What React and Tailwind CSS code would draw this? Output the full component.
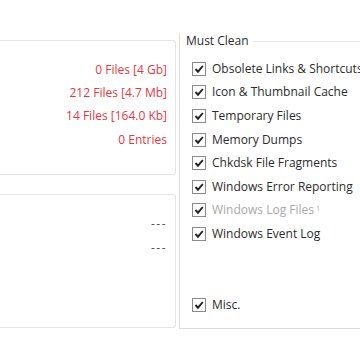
import React from "react";

const font = { fontFamily: '"Open Sans", "Noto Sans", sans-serif' };

function Check() {
  return (
    <span className="w-[14px] h-[14px] border border-[#8a8a8a] bg-white flex items-center justify-center shrink-0">
      <svg width="12" height="12" viewBox="0 0 12 12">
        <path d="M2.5 6 L5 8.7 L9.8 3" fill="none" stroke="#222" strokeWidth="1.9" />
      </svg>
    </span>
  );
}

function Row({ label, muted, sup }) {
  return (
    <div className="h-[23.6px] flex items-center gap-[6px] pl-[12px] whitespace-nowrap">
      <Check />
      <span className={muted ? "text-[#a8a8a8]" : "text-[#2b2b2b]"}>
        {label}
        {sup && <sup className="text-[7px] ml-[2px]">1</sup>}
      </span>
    </div>
  );
}

export default function App() {
  const stats = ["0 Files [4 Gb]", "212 Files [4.7 Mb]", "14 Files [164.0 Kb]", "0 Entries"];
  const items = [
    "Obsolete Links & Shortcuts",
    "Icon & Thumbnail Cache",
    "Temporary Files",
    "Memory Dumps",
    "Chkdsk File Fragments",
    "Windows Error Reporting",
  ];

  return (
    <div className="w-[360px] h-[360px] bg-white overflow-hidden text-[12px]" style={font}>
      <div className="flex pt-[33px]">
        {/* Left column */}
        <div className="w-[176px] shrink-0 pt-[7px] flex flex-col gap-[19px]">
          <div className="h-[135px] border-y border-r border-[#e4e4e4] rounded-r-[3px] pt-[17px] pr-[8px] text-right text-[#e2383f]">
            {stats.map((s) => (
              <div key={s} className="h-[23.4px] flex items-center justify-end">{s}</div>
            ))}
          </div>
          <div className="h-[134px] border-y border-r border-[#e4e4e4] rounded-r-[3px] pt-[17px] pr-[8px] text-[#555]">
            <div className="h-[24px] flex items-center justify-end tracking-[1.5px]">---</div>
            <div className="h-[24px] flex items-center justify-end tracking-[1.5px]">---</div>
          </div>
        </div>

        {/* Must Clean group */}
        <div className="flex-1 ml-[3px] h-[296px] border-l border-b border-[#dcdcdc]">
          <div className="flex items-center h-[16px]">
            <span className="pl-[6px] pr-[4px] text-[#2b2b2b] leading-none">Must Clean</span>
            <div className="flex-1 h-px bg-[#e6e6e6]" />
          </div>
          <div className="pt-[8px]">
            {items.map((i) => (
              <Row key={i} label={i} />
            ))}
            <Row label="Windows Log Files" muted sup />
            <Row label="Windows Event Log" />
            <div className="h-[47px]" />
            <Row label="Misc." />
          </div>
        </div>
      </div>
    </div>
  );
}
